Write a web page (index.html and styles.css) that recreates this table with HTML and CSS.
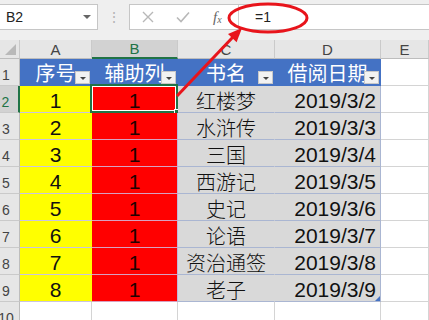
FILE: index.html
```html
<!DOCTYPE html>
<html lang="zh">
<head>
<meta charset="utf-8">
<link rel="stylesheet" href="styles.css">
</head>
<body>
<div class="app">
  <div class="fbar">
    <div class="namebox"><span>B2</span><span class="caret"></span></div>
    <div class="dots">⋮</div>
    <div class="fx-area">
      <div class="btns">
        <svg class="ico" width="14" height="14" viewBox="0 0 14 14"><path d="M2 2 L12 12 M12 2 L2 12" stroke="#b8b8b8" stroke-width="1.4" fill="none"/></svg>
        <svg class="ico" width="16" height="14" viewBox="0 0 16 14"><path d="M2 7.5 L6 11.5 L14 2.5" stroke="#b8b8b8" stroke-width="1.6" fill="none"/></svg>
        <span class="fx"><i>f</i><sub>x</sub></span>
      </div>
      <div class="formula">=1</div>
    </div>
  </div>
  <div class="gap"></div>
  <div class="sheet">
    <div class="ch corner"><span class="tri"></span></div>
    <div class="ch">A</div>
    <div class="ch sel">B</div>
    <div class="ch">C</div>
    <div class="ch">D</div>
    <div class="ch">E</div>

    <div class="rh">1</div>
    <div class="c th">序号<span class="filt"></span></div>
    <div class="c th">辅助列<span class="filt"></span></div>
    <div class="c th">书名<span class="filt"></span></div>
    <div class="c th">借阅日期<span class="filt"></span></div>
    <div class="c"></div>

    <div class="rh sel">2</div>
    <div class="c a">1</div>
    <div class="c b cur">1<span class="selbox"></span><span class="handle"></span></div>
    <div class="c g">红楼梦</div>
    <div class="c g d">2019/3/2</div>
    <div class="c"></div>

    <div class="rh">3</div>
    <div class="c a">2</div>
    <div class="c b">1</div>
    <div class="c g">水浒传</div>
    <div class="c g d">2019/3/3</div>
    <div class="c"></div>

    <div class="rh">4</div>
    <div class="c a">3</div>
    <div class="c b">1</div>
    <div class="c g">三国</div>
    <div class="c g d">2019/3/4</div>
    <div class="c"></div>

    <div class="rh">5</div>
    <div class="c a">4</div>
    <div class="c b">1</div>
    <div class="c g">西游记</div>
    <div class="c g d">2019/3/5</div>
    <div class="c"></div>

    <div class="rh">6</div>
    <div class="c a">5</div>
    <div class="c b">1</div>
    <div class="c g">史记</div>
    <div class="c g d">2019/3/6</div>
    <div class="c"></div>

    <div class="rh">7</div>
    <div class="c a">6</div>
    <div class="c b">1</div>
    <div class="c g">论语</div>
    <div class="c g d">2019/3/7</div>
    <div class="c"></div>

    <div class="rh">8</div>
    <div class="c a">7</div>
    <div class="c b">1</div>
    <div class="c g">资治通签</div>
    <div class="c g d">2019/3/8</div>
    <div class="c"></div>

    <div class="rh">9</div>
    <div class="c a">8</div>
    <div class="c b">1</div>
    <div class="c g">老子</div>
    <div class="c g d">2019/3/9<span class="resize"></span></div>
    <div class="c"></div>

    <div class="rh">10</div>
    <div class="c"></div>
    <div class="c"></div>
    <div class="c"></div>
    <div class="c"></div>
    <div class="c"></div>
  </div>
  <svg class="overlay" width="429" height="320" viewBox="0 0 429 320">
    <ellipse cx="268" cy="18" rx="39" ry="14" fill="none" stroke="#e8141b" stroke-width="3"/>
    <line x1="177" y1="96" x2="233" y2="37" stroke="#e8141b" stroke-width="3"/>
    <polygon points="242,28 236.6,42.2 228,34" fill="#e8141b"/>
  </svg>
</div>
</body>
</html>
```
FILE: styles.css
```css
html, body {
  margin: 0;
  padding: 0;
}
body {
  width: 429px;
  height: 320px;
  overflow: hidden;
  background: #fff;
  font-family: "Liberation Sans", "Noto Sans CJK SC", sans-serif;
}
.app {
  position: relative;
  width: 429px;
  height: 320px;
  overflow: hidden;
  background: #efefef;
}
.fbar {
  height: 30px;
  padding-top: 4px;
  box-sizing: border-box;
  display: flex;
}
.namebox {
  width: 99px;
  margin-left: -1px;
  box-sizing: border-box;
  border: 1px solid #c6c6c6;
  background: #fff;
  display: flex;
  align-items: center;
  justify-content: space-between;
  padding: 0 6px 0 6px;
  font-size: 14px;
  color: #222;
}
.caret {
  width: 0;
  height: 0;
  border-left: 4px solid transparent;
  border-right: 4px solid transparent;
  border-top: 4px solid #666;
}
.dots {
  width: 31px;
  display: flex;
  align-items: center;
  justify-content: center;
  color: #b4b4b4;
  font-size: 14px;
}
.fx-area {
  flex: 1;
  display: flex;
  border: 1px solid #c6c6c6;
  border-right: none;
  background: #fff;
}
.btns {
  width: 108px;
  display: flex;
  align-items: center;
  padding-left: 11px;
  box-sizing: border-box;
}
.ico {
  margin-right: 20px;
}
.btns .ico + .ico {
  margin-right: 22px;
}
.fx {
  font-family: "Liberation Serif", serif;
  color: #666;
  font-size: 15px;
}
.fx sub {
  font-style: italic;
  font-size: 10px;
  vertical-align: -1px;
}
.formula {
  flex: 1;
  border-left: 1px solid #d0d0d0;
  padding-left: 16px;
  display: flex;
  align-items: center;
  font-size: 14px;
  color: #222;
}
.gap {
  height: 10px;
}
.sheet {
  display: grid;
  grid-template-columns: 20px 72px 86px 97px 106px 48px;
  grid-template-rows: 19px repeat(10, 27px);
  background: #fff;
}
.ch {
  box-sizing: border-box;
  background: #e6e6e6;
  border-right: 1px solid #cacaca;
  border-bottom: 1px solid #bdbdbd;
  display: flex;
  align-items: center;
  justify-content: center;
  font-size: 15px;
  color: #444;
}
.ch.sel {
  background: #d2d2d2;
  border-bottom: 2px solid #217346;
  color: #217346;
}
.corner {
  position: relative;
}
.tri {
  position: absolute;
  right: 3px;
  bottom: 3px;
  width: 0;
  height: 0;
  border-left: 11px solid transparent;
  border-bottom: 11px solid #b9b9b9;
}
.rh {
  box-sizing: border-box;
  background: #e6e6e6;
  border-right: 1px solid #bdbdbd;
  border-bottom: 1px solid #cacaca;
  display: flex;
  align-items: flex-end;
  justify-content: center;
  padding: 0 7px 3px 0;
  font-size: 14px;
  line-height: 1;
  color: #444;
}
.rh.sel {
  background: #d2d2d2;
  border-right: 2px solid #217346;
  color: #217346;
}
.c {
  position: relative;
  box-sizing: border-box;
  border-right: 1px solid #d4d4d4;
  border-bottom: 1px solid #d4d4d4;
  display: flex;
  align-items: flex-end;
  justify-content: center;
  padding-bottom: 1px;
  font-size: 21px;
  line-height: 1;
  color: #111;
  white-space: nowrap;
}
.th {
  background: #4472c4;
  border-right-color: #4472c4;
  border-bottom-color: #4472c4;
  color: #fff;
  font-family: "Noto Sans CJK SC", sans-serif;
  font-size: 20px;
  padding-bottom: 2px;
}
.filt {
  position: absolute;
  right: 1px;
  bottom: 1px;
  width: 15px;
  height: 13px;
  box-sizing: border-box;
  background: #f2f2f2;
  border: 1px solid #c8c8c8;
  display: flex;
  align-items: center;
  justify-content: center;
}
.filt::after {
  content: "";
  width: 0;
  height: 0;
  margin-top: 2px;
  border-left: 3px solid transparent;
  border-right: 3px solid transparent;
  border-top: 3px solid #444;
}
.a {
  background: #ffff00;
  border-right-color: #ffff00;
  border-bottom-color: #c9c4e0;
}
.b {
  background: #ff0000;
  border-right-color: #c0b8d8;
  border-bottom-color: #d8a0c0;
  color: #200;
}
.g {
  background: #d9d9d9;
  border-right-color: #d9d9d9;
  border-bottom-color: #aab6d2;
  font-family: "Noto Sans CJK SC", sans-serif;
  font-weight: 300;
  font-size: 20px;
  padding-bottom: 1px;
}
.d {
  font-family: "Liberation Sans", sans-serif;
  font-weight: 400;
  font-size: 21px;
  justify-content: flex-end;
  padding-right: 4px;
  border-right-color: #aab6d2;
}
.selbox {
  position: absolute;
  top: -2px;
  left: -2px;
  right: -1px;
  bottom: -1px;
  border: 2px solid #217346;
  box-shadow: inset 0 0 0 1px #fff;
}
.handle {
  position: absolute;
  right: -4px;
  bottom: -4px;
  width: 7px;
  height: 7px;
  box-sizing: border-box;
  background: #217346;
  border: 1px solid #fff;
}
.resize {
  position: absolute;
  right: 0;
  bottom: 0;
  width: 0;
  height: 0;
  border-left: 5px solid transparent;
  border-bottom: 5px solid #4472c4;
}
.overlay {
  position: absolute;
  top: 0;
  left: 0;
  pointer-events: none;
}
```
